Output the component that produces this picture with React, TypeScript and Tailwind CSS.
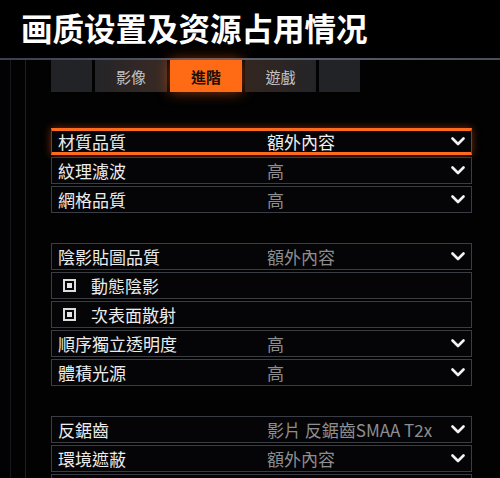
import React from 'react';

type Row = {
    label: string;
    value?: string;
    check?: boolean;
    selected?: boolean;
};

const groups: Row[][] = [
    [
        { label: '材質品質', value: '額外內容', selected: true },
        { label: '紋理濾波', value: '高' },
        { label: '網格品質', value: '高' },
    ],
    [
        { label: '陰影貼圖品質', value: '額外內容' },
        { label: '動態陰影', check: true },
        { label: '次表面散射', check: true },
        { label: '順序獨立透明度', value: '高' },
        { label: '體積光源', value: '高' },
    ],
    [
        { label: '反鋸齒', value: '影片 反鋸齒SMAA T2x' },
        { label: '環境遮蔽', value: '額外內容' },
        { label: '', value: '' },
    ],
];

const Chevron = () => (
    <svg width="14" height="9" viewBox="0 0 14 9" fill="none" className="shrink-0">
        <path d="M1.5 1.5 7 7l5.5-5.5" stroke="#f2f2f2" strokeWidth="2.6" strokeLinecap="round" strokeLinejoin="round" />
    </svg>
);

const Checkbox = () => (
    <div className="w-[13px] h-[13px] border-2 border-[#dcdcdc] p-[2px] shrink-0">
        <div className="w-full h-full bg-[#e6e6e6]" />
    </div>
);

const SettingRow: React.FC<{ row: Row }> = ({ row }) => {
    const base = row.selected
        ? 'border-x border-x-[#4a4c52] border-y-[3px] border-y-[#ff6b1e] shadow-[0_0_8px_rgba(255,100,20,0.45)]'
        : 'border border-[#3a3d44]';

    return (
        <div className={`h-[27px] mb-[2px] flex items-center bg-[#050507] ${base}`}>
            {row.check ? (
                <div className="flex items-center pl-[11px] gap-[15px]">
                    <Checkbox />
                    <span className="text-[#ececec]">{row.label}</span>
                </div>
            ) : (
                <>
                    <span className="w-[215px] pl-[6px] text-[#ececec]">{row.label}</span>
                    <span className={`flex-1 ${row.selected ? 'text-[#f0f0f0]' : 'text-[#8e8e8e]'}`}>{row.value}</span>
                    {row.value !== undefined && (
                        <div className="pr-[6px]">
                            <Chevron />
                        </div>
                    )}
                </>
            )}
        </div>
    );
};

const App: React.FC = () => {
    return (
        <div
            className="w-[500px] h-[478px] overflow-hidden bg-[#020203] text-[17px] leading-none"
            style={{ fontFamily: '"Noto Sans CJK TC", "Noto Sans CJK SC", sans-serif' }}
        >
            <div className="h-[58px] pl-[21px] pt-[12px] bg-black">
                <h1
                    className="text-[31.5px] font-bold text-white tracking-[0px] leading-none"
                    style={{ fontFamily: '"Noto Sans CJK SC", sans-serif' }}
                >
                    画质设置及资源占用情况
                </h1>
            </div>
            <div className="h-[2px] bg-gradient-to-r from-[#3a4050] via-[#5a5f6c] to-[#4a4f5c]" />

            <div className="flex h-[418px]">
                <div className="w-[51px] flex shrink-0">
                    <div className="ml-[10px] w-px bg-[#16181d]" />
                    <div className="ml-[14px] w-px bg-[#1c1f26]" />
                </div>

                <div className="w-[421px]">
                    <div className="flex h-[32px] gap-[3px] text-[15px]">
                        <div className="w-[41px] bg-[#222326]" />
                        <div className="w-[72px] flex items-center justify-center bg-gradient-to-r from-[#242428] to-[#3a2a24] text-[#c4c4c4]">影像</div>
                        <div className="w-[72px] flex items-center justify-center bg-[#ff6a14] text-[#1a1008] font-bold shadow-[0_0_14px_rgba(255,100,20,0.55)]">進階</div>
                        <div className="w-[71px] flex items-center justify-center bg-gradient-to-r from-[#33261f] to-[#242428] text-[#c4c4c4]">遊戲</div>
                        <div className="w-[41px] bg-[#222326]" />
                    </div>

                    <div className="mt-[36px] flex flex-col gap-[28px]">
                        {groups.map((g, i) => (
                            <div key={i}>
                                {g.map((row, j) => (
                                    <SettingRow key={j} row={row} />
                                ))}
                            </div>
                        ))}
                    </div>
                </div>
            </div>
        </div>
    );
};

export default App;
